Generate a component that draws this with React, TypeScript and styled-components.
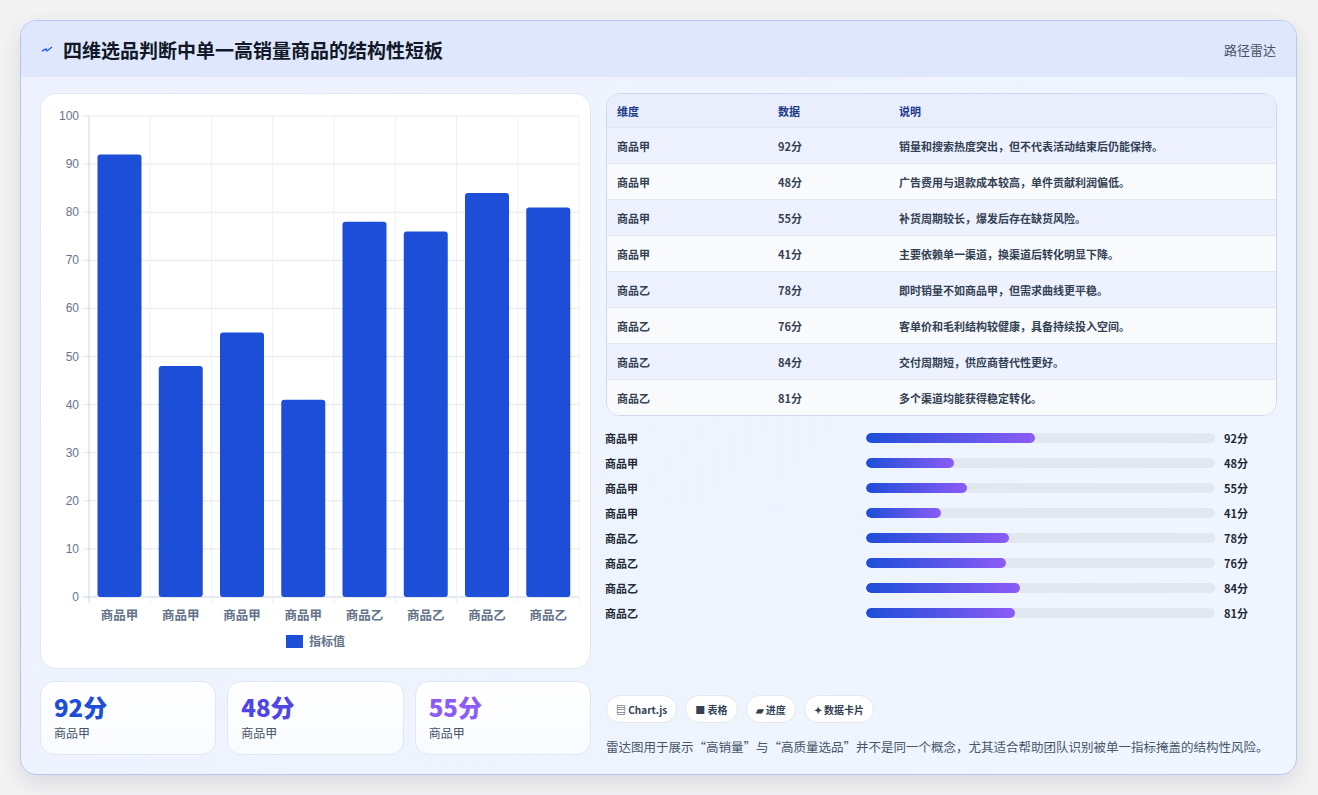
import React from 'react';
import styled, { createGlobalStyle } from 'styled-components';

const GlobalStyle = createGlobalStyle`
  html, body { margin: 0; padding: 0; background: #f3f3f4; }
  body { font-family: "Noto Sans CJK SC", "Noto Sans", sans-serif; }
`;

const rows = [
  { name: '商品甲', v: 92, note: '销量和搜索热度突出，但不代表活动结束后仍能保持。' },
  { name: '商品甲', v: 48, note: '广告费用与退款成本较高，单件贡献利润偏低。' },
  { name: '商品甲', v: 55, note: '补货周期较长，爆发后存在缺货风险。' },
  { name: '商品甲', v: 41, note: '主要依赖单一渠道，换渠道后转化明显下降。' },
  { name: '商品乙', v: 78, note: '即时销量不如商品甲，但需求曲线更平稳。' },
  { name: '商品乙', v: 76, note: '客单价和毛利结构较健康，具备持续投入空间。' },
  { name: '商品乙', v: 84, note: '交付周期短，供应商替代性更好。' },
  { name: '商品乙', v: 81, note: '多个渠道均能获得稳定转化。' },
];

const Page = styled.div`
  padding: 20px 21px 21px 20px;
`;

const Frame = styled.div`
  border: 1px solid #b9c6ef;
  border-radius: 16px;
  background: linear-gradient(135deg, #eef2ff, #eff6ff);
  box-shadow: 0 8px 22px rgba(30, 41, 59, 0.12);
  overflow: hidden;
  height: 753px;
  display: flex;
  flex-direction: column;
`;

const Header = styled.div`
  height: 56px;
  flex: none;
  display: flex;
  align-items: center;
  justify-content: space-between;
  padding: 0 20px;
  background: #dfe7fd;
`;

const Title = styled.h1`
  margin: 0;
  font-size: 19px;
  font-weight: 700;
  color: #111827;
  display: flex;
  align-items: center;
  gap: 10px;
`;

const Tag = styled.span`
  font-size: 13px;
  color: #475569;
`;

const Body = styled.div`
  flex: 1;
  display: grid;
  grid-template-columns: 551px 1fr;
  gap: 15px;
  padding: 16px 19px 18px 19px;
`;

const Col = styled.div`
  display: flex;
  flex-direction: column;
  gap: 12px;
`;

const ChartCard = styled.div`
  height: 576px;
  background: #fff;
  border: 1px solid #e2e8f0;
  border-radius: 16px;
  box-sizing: border-box;
`;

const Stats = styled.div`
  display: grid;
  grid-template-columns: repeat(3, 1fr);
  gap: 11px;
`;

const Stat = styled.div`
  height: 74px;
  box-sizing: border-box;
  background: linear-gradient(180deg, #ffffff, #f8fbff);
  border: 1px solid #e2e8f0;
  border-radius: 14px;
  padding: 10px 13px;
`;

const StatValue = styled.div<{ $c: string }>`
  font-size: 24px;
  font-weight: 800;
  color: ${p => p.$c};
  line-height: 30px;
`;

const StatLabel = styled.div`
  font-size: 12px;
  color: #475569;
  margin-top: 2px;
`;

const Table = styled.div`
  border: 1px solid #cfd8ee;
  border-radius: 14px;
  overflow: hidden;
  background: #fff;
`;

const Row = styled.div<{ $bg: string; $head?: boolean }>`
  display: grid;
  grid-template-columns: 161px 121px 1fr;
  height: ${p => (p.$head ? 33 : 35)}px;
  align-items: center;
  padding-left: 10px;
  background: ${p => p.$bg};
  border-bottom: 1px solid #e2e8f0;
  font-size: 11px;
  font-weight: 700;
  color: ${p => (p.$head ? '#1e3a8a' : '#334155')};
  &:last-child { border-bottom: none; }
`;

const Bars = styled.div`
  display: flex;
  flex-direction: column;
  gap: 9px;
  margin-top: 2px;
  margin-left: -1px;
`;

const BarRow = styled.div`
  display: grid;
  grid-template-columns: 252px 349px auto;
  gap: 9px;
  align-items: center;
  font-size: 11px;
  font-weight: 700;
  color: #1f2937;
  height: 16px;
`;

const Track = styled.div`
  height: 10px;
  border-radius: 5px;
  background: #e2e8f0;
  overflow: hidden;
`;

const Fill = styled.div`
  height: 100%;
  border-radius: 5px;
  background: linear-gradient(90deg, #1d4ed8, #8b5cf6);
`;

const Spacer = styled.div`
  flex: 1;
`;

const Chips = styled.div`
  display: flex;
  gap: 8px;
  margin-bottom: 2px;
`;

const Chip = styled.span`
  height: 28px;
  box-sizing: border-box;
  display: inline-flex;
  align-items: center;
  gap: 3px;
  padding: 0 9px;
  background: #fff;
  border: 1px solid #e5e7eb;
  border-radius: 14px;
  font-size: 10px;
  font-weight: 700;
  color: #334155;
`;

const Note = styled.p`
  margin: 0;
  font-size: 12.5px;
  color: #475569;
`;

const Chart = () => {
  const x0 = 48, x1 = 538, y0 = 22, y1 = 503;
  const cw = (x1 - x0) / 8;
  const ys = (v: number) => y1 - ((y1 - y0) * v) / 100;
  return (
    <svg width="551" height="576" style={{ display: 'block' }}>
      {[0, 10, 20, 30, 40, 50, 60, 70, 80, 90, 100].map(t => (
        <g key={t}>
          <line x1={x0 - 6} x2={x1} y1={ys(t)} y2={ys(t)} stroke={t === 0 ? '#cbd5e1' : '#e5e7eb'} />
          <text x={x0 - 10} y={ys(t) + 4} fontSize="12" fill="#64748b" textAnchor="end" fontFamily="Liberation Sans, sans-serif">{t}</text>
        </g>
      ))}
      {Array.from({ length: 9 }).map((_, i) => (
        <line key={i} x1={x0 + i * cw} x2={x0 + i * cw} y1={y0} y2={y1 + 6} stroke={i === 0 ? '#cbd5e1' : '#eef0f3'} />
      ))}
      {rows.map((r, i) => (
        <g key={i}>
          <rect x={x0 + i * cw + 8.5} y={ys(r.v)} width={44} height={y1 - ys(r.v)} rx="3" fill="#1d4ed8" />
          <text x={x0 + i * cw + cw / 2} y={y1 + 23} fontSize="12.5" fill="#64748b" textAnchor="middle" fontWeight="700">{r.name}</text>
        </g>
      ))}
      <rect x="245" y="541" width="17" height="13" fill="#1d4ed8" />
      <text x="268" y="552" fontSize="12" fill="#64748b" fontWeight="700">指标值</text>
    </svg>
  );
};

export default function App() {
  return (
    <Page>
      <GlobalStyle />
      <Frame>
        <Header>
          <Title>
            <svg width="12" height="10" viewBox="0 0 12 10">
              <path d="M1 7 L5 5 L6 7 L11 3" stroke="#2563eb" strokeWidth="1.4" fill="none" />
            </svg>
            四维选品判断中单一高销量商品的结构性短板
          </Title>
          <Tag>路径雷达</Tag>
        </Header>
        <Body>
          <Col>
            <ChartCard><Chart /></ChartCard>
            <Stats>
              <Stat><StatValue $c="#1d4ed8">92分</StatValue><StatLabel>商品甲</StatLabel></Stat>
              <Stat><StatValue $c="#4f46e5">48分</StatValue><StatLabel>商品甲</StatLabel></Stat>
              <Stat><StatValue $c="#8b5cf6">55分</StatValue><StatLabel>商品甲</StatLabel></Stat>
            </Stats>
          </Col>
          <Col>
            <Table>
              <Row $head $bg="#e8eefc"><span>维度</span><span>数据</span><span>说明</span></Row>
              {rows.map((r, i) => (
                <Row key={i} $bg={i % 2 === 0 ? '#eef2ff' : '#f8fafc'}>
                  <span>{r.name}</span><span>{r.v}分</span><span>{r.note}</span>
                </Row>
              ))}
            </Table>
            <Bars>
              {rows.map((r, i) => (
                <BarRow key={i}>
                  <span>{r.name}</span>
                  <Track><Fill style={{ width: `${(r.v / 190) * 100}%` }} /></Track>
                  <span>{r.v}分</span>
                </BarRow>
              ))}
            </Bars>
            <Spacer />
            <Chips>
              <Chip>▤ Chart.js</Chip>
              <Chip>■ 表格</Chip>
              <Chip>▰ 进度</Chip>
              <Chip>✦ 数据卡片</Chip>
            </Chips>
            <Note>雷达图用于展示“高销量”与“高质量选品”并不是同一个概念，尤其适合帮助团队识别被单一指标掩盖的结构性风险。</Note>
          </Col>
        </Body>
      </Frame>
    </Page>
  );
}
